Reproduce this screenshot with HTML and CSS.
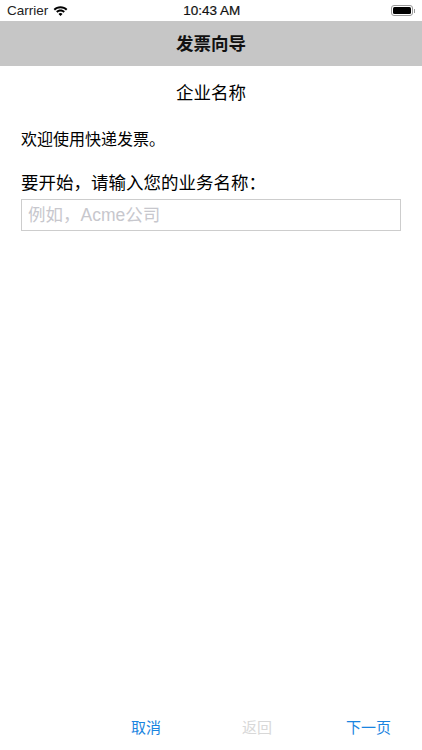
FILE: index.html
```html
<!DOCTYPE html>
<html lang="zh">
<head>
<meta charset="utf-8">
<title>发票向导</title>
<link rel="stylesheet" href="styles.css">
</head>
<body>
<div class="app">
  <div class="status">
    <span class="carrier">Carrier</span>
    <svg class="wifi" width="15" height="11" viewBox="0 0 16 12"><path d="M8 2.400c2.300 0 4.400.9 6 2.400l1.500-1.600C13.500 1.300 10.900.2 8 .2S2.500 1.300.5 3.200L2 4.800c1.600-1.500 3.700-2.400 6-2.400z"/><path d="M8 6.100c1.300 0 2.400.5 3.300 1.300l1.500-1.600C11.500 4.600 9.800 3.900 8 3.900s-3.500.7-4.800 1.900l1.500 1.600C5.600 6.600 6.700 6.100 8 6.100z"/><path d="M8 7.700c-.9 0-1.600.3-2.200.9L8 11l2.200-2.400c-.6-.6-1.300-.9-2.200-.9z"/></svg>
    <span class="time">10:43 AM</span>
    <div class="battery"><div class="battery-fill"></div></div>
    <div class="battery-cap"></div>
  </div>
  <header class="navbar">发票向导</header>
  <main class="content">
    <h1 class="section-title">企业名称</h1>
    <p class="welcome">欢迎使用快递发票。</p>
    <label class="prompt" for="biz">要开始，请输入您的业务名称：</label>
    <input class="biz-input" id="biz" type="text" placeholder="例如，Acme公司">
  </main>
  <footer class="toolbar">
    <span class="tool-cancel">取消</span>
    <span class="tool-back">返回</span>
    <span class="tool-next">下一页</span>
  </footer>
</div>
</body>
</html>
```
FILE: styles.css
```css
* { box-sizing: border-box; }
html, body { margin: 0; padding: 0; }
body {
  width: 422px;
  height: 750px;
  background: #fff;
  overflow: hidden;
  font-family: "Liberation Sans", "Noto Sans CJK SC", sans-serif;
  color: #000;
}
.app { display: flex; flex-direction: column; height: 750px; }
.status {
  height: 21px;
  display: flex;
  align-items: center;
  padding: 0 7px;
}
.carrier { font-size: 13.500px; color: #222; }
.wifi { fill: #000; margin: 1px 0 0 5px; }
.time {
  margin-left: 115px;
  font-size: 13.500px;
  color: #111;
  -webkit-text-stroke: 0.2px #111;
}
.battery {
  margin-left: auto;
  width: 22px;
  height: 11px;
  border: 1px solid #999;
  border-radius: 3px;
  padding: 1px;
}
.battery-fill { width: 100%; height: 100%; background: #000; border-radius: 1.5px; }
.battery-cap { width: 1px; height: 4px; margin-left: 1px; background: #999; }
.navbar {
  height: 45px;
  padding-bottom: 3px;
  background: #c6c6c6;
  display: flex;
  align-items: center;
  justify-content: center;
  font-size: 17.500px;
  font-weight: 700;
  color: #111;
}
.content { flex: 1; padding: 0 21px; display: flex; flex-direction: column; }
.section-title {
  margin: 15px 0 0;
  font-size: 17.500px;
  font-weight: 400;
  line-height: 24px;
  text-align: center;
}
.welcome { margin: 23px 0 0; font-size: 16px; line-height: 24px; }
.prompt { margin-top: 19px; font-size: 17.500px; line-height: 24px; }
.biz-input {
  margin-top: 4px;
  width: 100%;
  height: 32px;
  border: 1.500px solid #cdcdcd;
  border-radius: 0;
  outline: none;
  padding: 0 6px;
  font: inherit;
  font-size: 17.500px;
}
.biz-input::placeholder { color: #c7c7cd; opacity: 1; }
.toolbar {
  height: 44px;
  display: grid;
  grid-template-columns: 111px 104px auto;
  padding-left: 131px;
  padding-top: 11px;
  font-size: 15px;
  line-height: 22px;
}
.tool-cancel, .tool-next { color: #1a84e0; }
.tool-back { color: #d8d8d8; }
```
